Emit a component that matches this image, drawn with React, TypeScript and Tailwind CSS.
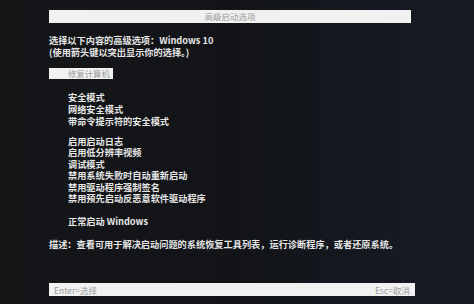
const font = { fontFamily: '"Noto Sans CJK SC", "Noto Sans", sans-serif' };

const safeModes = ['安全模式', '网络安全模式', '带命令提示符的安全模式'];

const bootOptions = [
  '启用启动日志',
  '启用低分辨率视频',
  '调试模式',
  '禁用系统失败时自动重新启动',
  '禁用驱动程序强制签名',
  '禁用预先启动反恶意软件驱动程序',
];

export default function App() {
  return (
    <div
      style={font}
      className="flex h-[304px] w-[474px] flex-col overflow-hidden bg-linear-to-r from-[#151618] via-[#121418] to-[#171b26] pl-[49px] pt-[10px] text-[9.2px] font-bold text-[#e6e6e6]"
    >
      <div className="flex h-[13px] w-[362px] items-center justify-center bg-[#f1f1f1] text-[8.5px] font-normal text-[#9b9b9b]">
        高级启动选项
      </div>

      <div className="mt-[12px] leading-[11.5px]">
        <div>选择以下内容的高级选项：Windows 10</div>
        <div>(使用箭头键以突出显示你的选择。)</div>
      </div>

      <div className="mt-[10px] flex h-[11px] w-[64px] items-center bg-[#f1f1f1] pl-[19px] text-[8.4px] font-normal text-[#9b9b9b]">
        修复计算机
      </div>

      <div className="mt-[12px] pl-[19px] leading-[12px]">
        {safeModes.map((m) => (
          <div key={m}>{m}</div>
        ))}
      </div>

      <div className="mt-[9px] pl-[19px] leading-[11.4px]">
        {bootOptions.map((o) => (
          <div key={o}>{o}</div>
        ))}
      </div>

      <div className="mt-[11px] pl-[19px] leading-[12px]">正常启动 Windows</div>

      <div className="mt-[11px] leading-[12px]">
        描述：查看可用于解决启动问题的系统恢复工具列表，运行诊断程序，或者还原系统。
      </div>

      <div className="mt-[33px] flex h-[13px] w-[366px] items-center justify-between bg-[#f1f1f1] px-[5px] text-[8.5px] font-normal text-[#9b9b9b]">
        <span>Enter=选择</span>
        <span>Esc=取消</span>
      </div>
    </div>
  );
}
